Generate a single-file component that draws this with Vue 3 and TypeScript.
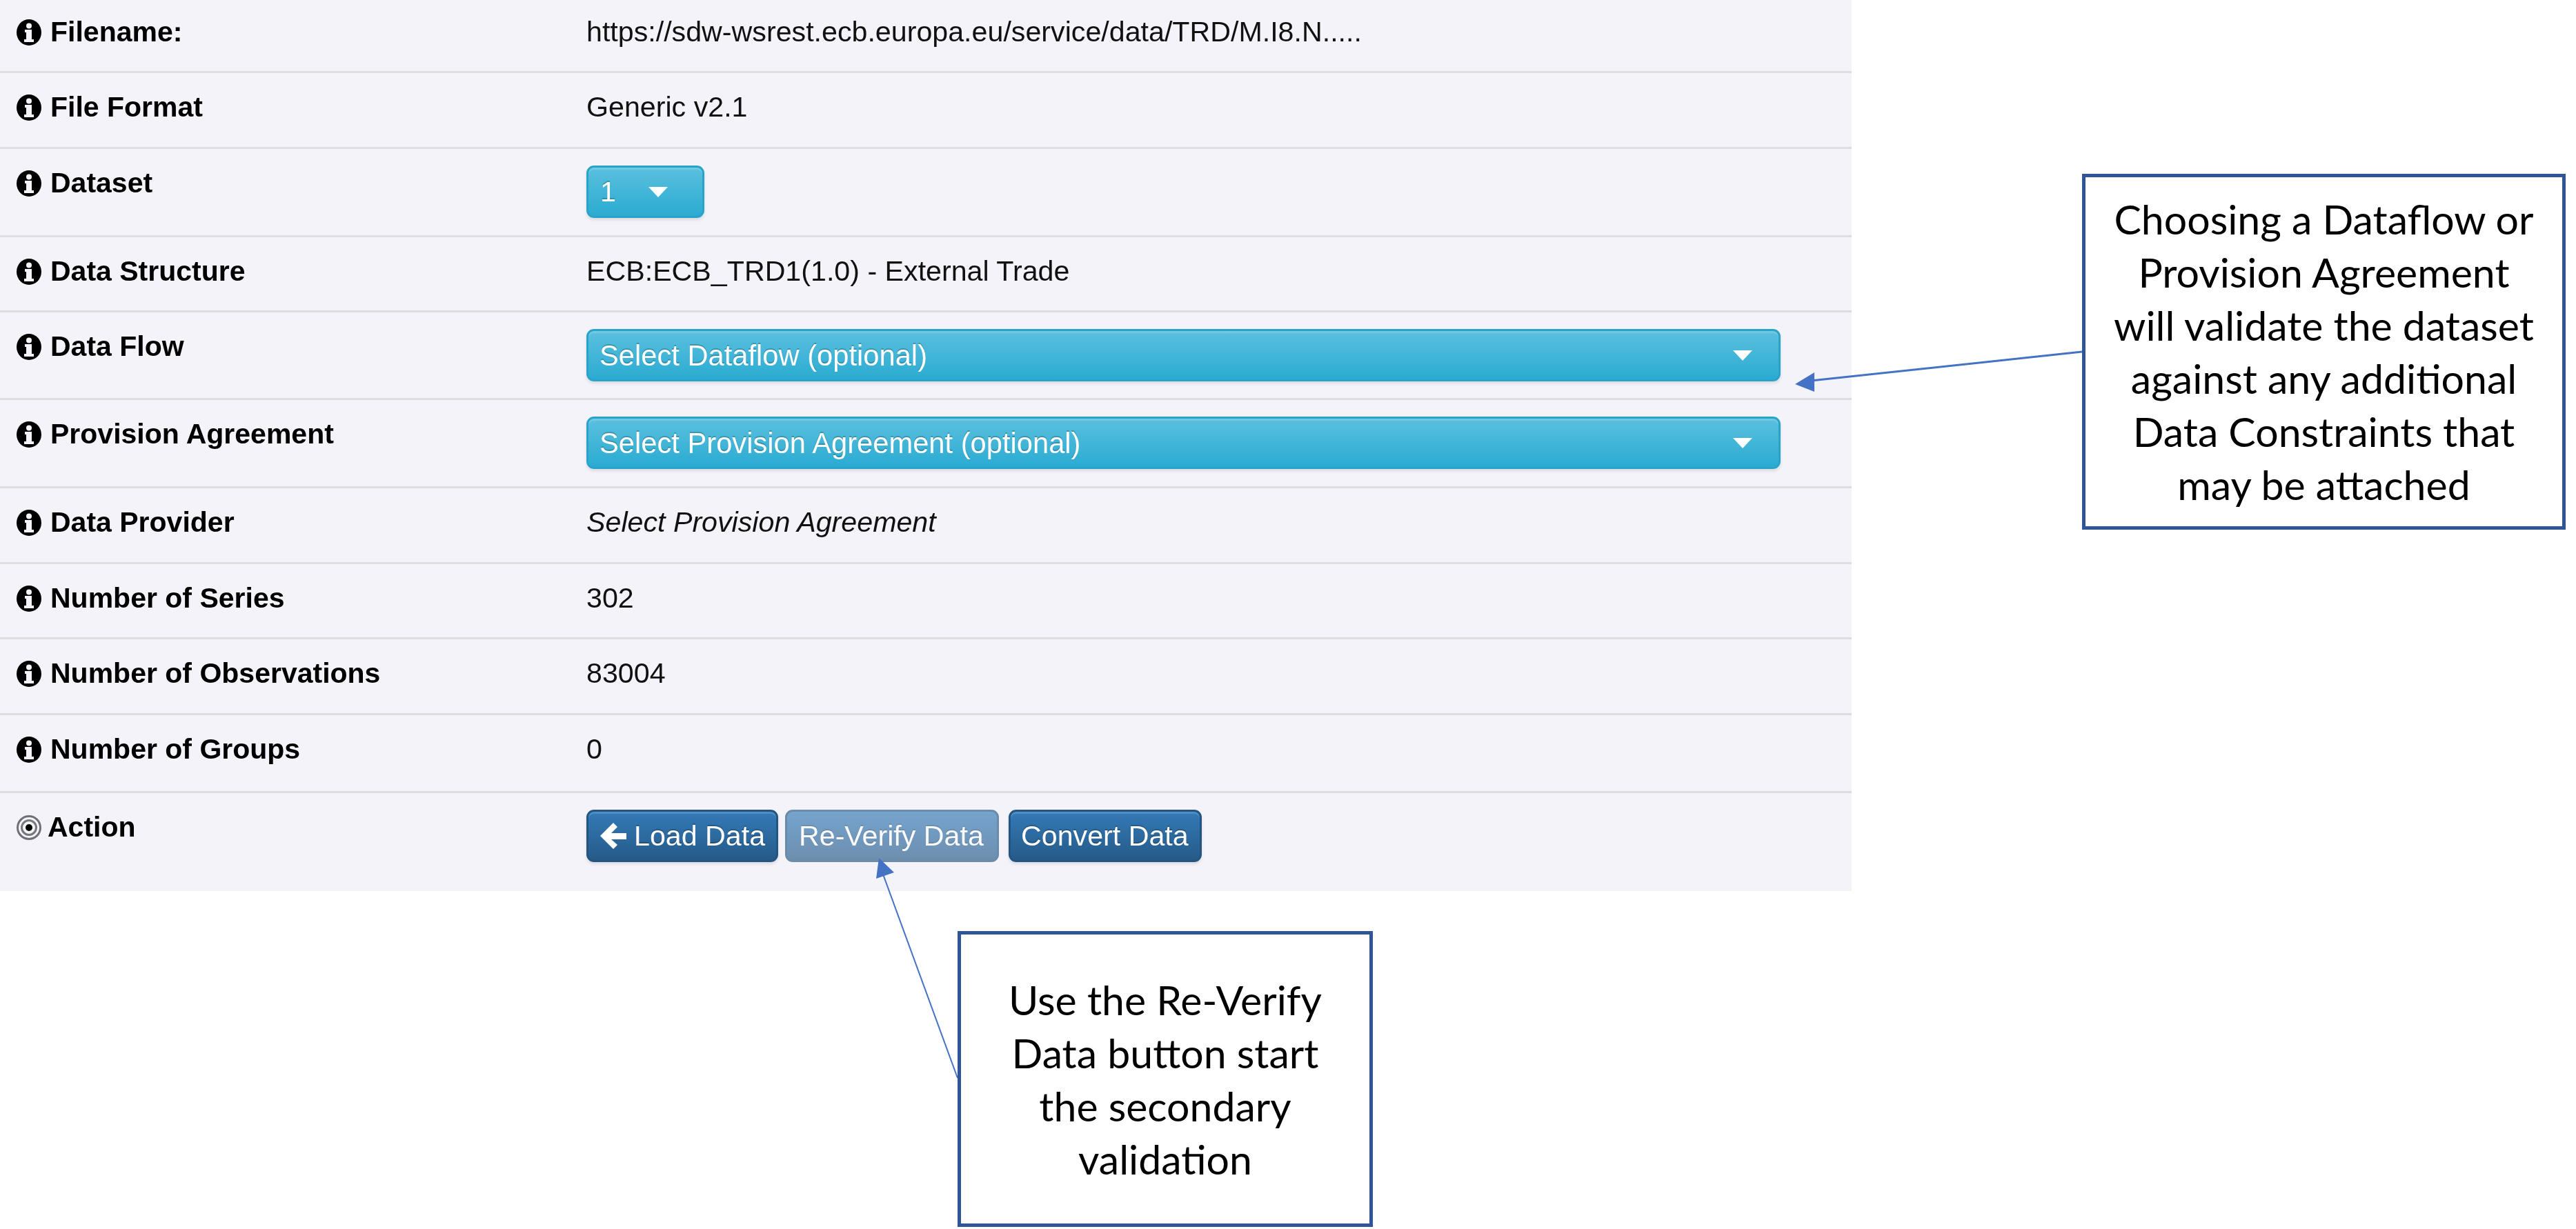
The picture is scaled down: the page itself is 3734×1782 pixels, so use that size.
<script setup lang="ts">
interface Row {
  label: string;
  value?: string;
  height: number;
  kind?: "dataset" | "select" | "italic" | "action";
}

const rows: Row[] = [
  { label: "Filename:", value: "https://sdw-wsrest.ecb.europa.eu/service/data/TRD/M.I8.N.....", height: 106 },
  { label: "File Format", value: "Generic v2.1", height: 110 },
  { label: "Dataset", value: "1", height: 128, kind: "dataset" },
  { label: "Data Structure", value: "ECB:ECB_TRD1(1.0) - External Trade", height: 109 },
  { label: "Data Flow", value: "Select Dataflow (optional)", height: 127, kind: "select" },
  { label: "Provision Agreement", value: "Select Provision Agreement (optional)", height: 128, kind: "select" },
  { label: "Data Provider", value: "Select Provision Agreement", height: 110, kind: "italic" },
  { label: "Number of Series", value: "302", height: 109 },
  { label: "Number of Observations", value: "83004", height: 110 },
  { label: "Number of Groups", value: "0", height: 113 },
  { label: "Action", height: 142, kind: "action" },
];
</script>

<template>
  <div class="page">
    <div class="panel">
      <div
        v-for="row in rows"
        :key="row.label"
        class="row"
        :style="{ height: row.height + 'px' }"
      >
        <div class="label">
          <svg v-if="row.kind === 'action'" class="icon" viewBox="0 0 36 38">
            <circle cx="18" cy="19" r="16.5" fill="none" stroke="#6f6f78" stroke-width="3" />
            <circle cx="18" cy="19" r="10.5" fill="none" stroke="#77777f" stroke-width="3" />
            <circle cx="18" cy="19" r="5" fill="#000" />
          </svg>
          <svg v-else class="icon" viewBox="0 0 36 38">
            <ellipse cx="18" cy="19" rx="18" ry="19" fill="#000" />
            <circle cx="18" cy="9.5" r="4" fill="#f3f3f9" />
            <path d="M12 15h10v14h3v4H11v-4h3V19h-2z" fill="#f3f3f9" />
          </svg>
          <span :class="{ actionText: row.kind === 'action' }">{{ row.label }}</span>
        </div>

        <div class="value">
          <button v-if="row.kind === 'dataset'" class="btn info dataset">
            <span>{{ row.value }}</span>
            <i class="caret"></i>
          </button>
          <button v-else-if="row.kind === 'select'" class="btn info wide">
            <span>{{ row.value }}</span>
            <i class="caret"></i>
          </button>
          <em v-else-if="row.kind === 'italic'">{{ row.value }}</em>
          <div v-else-if="row.kind === 'action'" class="actions">
            <button class="btn primary load">
              <svg class="back" viewBox="0 0 38 38">
                <path d="M19 0l6 6-9 9h22v9H16l9 8-6 6L0 19z" fill="#fff" />
              </svg>
              Load Data
            </button>
            <button class="btn primary disabled">Re-Verify Data</button>
            <button class="btn primary convert">Convert Data</button>
          </div>
          <template v-else>{{ row.value }}</template>
        </div>
      </div>
    </div>

    <svg class="arrows" viewBox="0 0 3734 1782">
      <line x1="3018" y1="510" x2="2625" y2="552" stroke="#4472c4" stroke-width="3" />
      <polygon points="2602,557 2630,540 2630,568" fill="#4472c4" />
      <line x1="1388" y1="1563" x2="1279" y2="1265" stroke="#4472c4" stroke-width="2" />
      <polygon points="1274,1244 1270,1274 1296,1265" fill="#4472c4" />
    </svg>

    <div class="callout side">
      Choosing a Dataflow or<br />
      Provision Agreement<br />
      will validate the dataset<br />
      against any additional<br />
      Data Constraints that<br />
      may be attached
    </div>
    <div class="callout below">
      Use the Re-Verify<br />
      Data button start<br />
      the secondary<br />
      validation
    </div>
  </div>
</template>

<style>
body {
  margin: 0;
  background: #fff;
}
</style>

<style scoped>
.page {
  position: relative;
  width: 3734px;
  height: 1782px;
  overflow: hidden;
  font-family: "Liberation Sans", Arial, sans-serif;
  font-size: 41.2px;
  line-height: 57px;
}

/* the source is an upscaled screenshot, so its text is soft */
.panel {
  width: 2684px;
  background: #f3f3f9;
  color: #111;
  filter: blur(0.7px);
}

.row {
  display: grid;
  grid-template-columns: 850px 1fr;
  box-sizing: border-box;
  padding-top: 21px;
  border-bottom: 3px solid #dedede;
}

.row:first-child {
  padding-top: 18px;
}

.row:last-child {
  border-bottom: none;
}

.label {
  display: flex;
  align-items: center;
  gap: 13px;
  padding-left: 24px;
  height: 57px;
  font-weight: 700;
  font-size: 41px;
  color: #000;
}

.icon {
  width: 36px;
  height: 38px;
  flex: none;
}

.actionText {
  margin-left: -4px;
}

.btn {
  display: flex;
  align-items: center;
  box-sizing: border-box;
  height: 76px;
  margin-top: 3px;
  padding: 0 17px;
  border-radius: 11px;
  border: 3px solid transparent;
  font: inherit;
  color: #fff;
  text-shadow: 0 -2px 0 rgba(0, 0, 0, 0.2);
  box-shadow: inset 0 3px 0 rgba(255, 255, 255, 0.15), 0 3px 4px rgba(0, 0, 0, 0.1);
}

.info {
  background: linear-gradient(#5bc0de, #2aabd2);
  border-color: #28a4c9;
}

.primary {
  background: linear-gradient(#337ab7, #265a88);
  border-color: #245580;
}

.disabled {
  opacity: 0.65;
  width: 310px;
  box-shadow: none;
  white-space: nowrap;
}

.dataset {
  width: 171px;
}

.wide {
  width: 1731px;
  padding-left: 16px;
  font-size: 41.7px;
}

.caret {
  width: 0;
  height: 0;
  border-left: 14px solid transparent;
  border-right: 14px solid transparent;
  border-top: 15px solid #fff;
  margin-left: auto;
  margin-right: 21px;
}

.dataset .caret {
  margin-right: 33px;
}

.actions {
  display: flex;
  gap: 10px;
}

.load {
  width: 278px;
  gap: 11px;
  white-space: nowrap;
}

.convert {
  width: 280px;
  margin-left: 4px;
  padding-left: 15px;
  white-space: nowrap;
}

.back {
  width: 38px;
  height: 38px;
  flex: none;
}

.arrows {
  position: absolute;
  left: 0;
  top: 0;
  width: 3734px;
  height: 1782px;
  pointer-events: none;
}

.callout {
  position: absolute;
  display: flex;
  align-items: center;
  justify-content: center;
  box-sizing: border-box;
  border: 5px solid #2f5597;
  background: #fff;
  color: #000;
  text-align: center;
  font-family: Lato, "Open Sans", sans-serif;
  font-size: 59px;
  line-height: 77px;
}

.side {
  left: 3018px;
  top: 252px;
  width: 701px;
  height: 516px;
}

.below {
  left: 1388px;
  top: 1350px;
  width: 602px;
  height: 429px;
}
</style>
